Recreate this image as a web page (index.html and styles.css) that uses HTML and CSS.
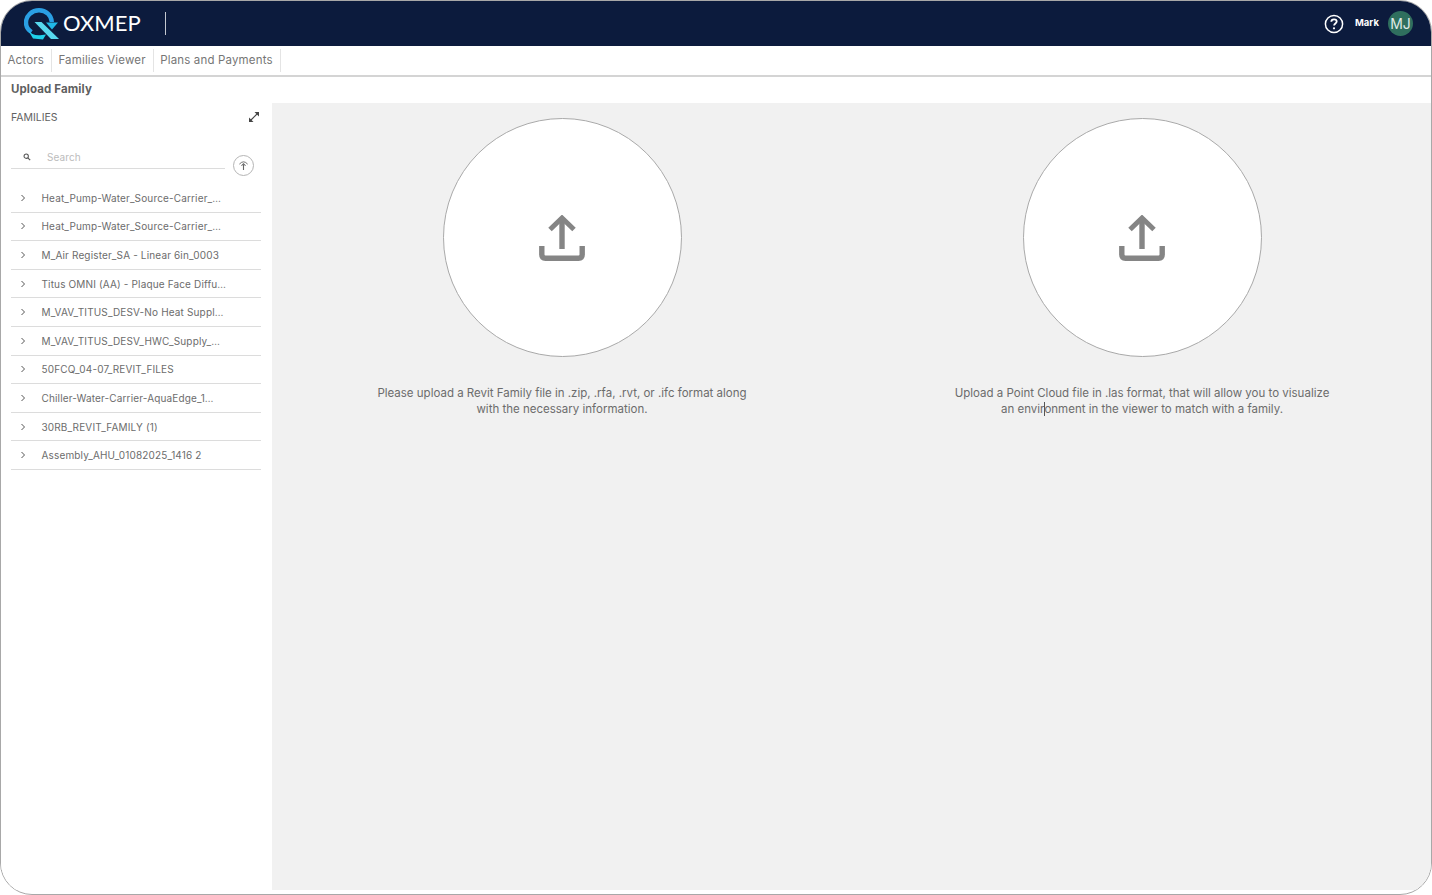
FILE: index.html
```html
<!DOCTYPE html>
<html lang="en">
<head>
<meta charset="utf-8">
<title>OXMEP - Upload Family</title>
<link rel="stylesheet" href="styles.css">
</head>
<body>
<div class="frame">
  <header class="topbar">
    <div class="brand">
      <svg class="logo-mark" viewBox="0 0 36 32" aria-hidden="true">
        <path d="M7.500 24 C3.500 21.500 2 18 2 14.500 C2 7.500 8 2.300 15 2.300 C22 2.300 27.500 7.500 27.800 14" fill="none" stroke="#2a9fe4" stroke-width="4.400"/>
        <path d="M22 14.500 L34 14.500 L28 21.500 Z" fill="#20b8e6"/>
        <path d="M4 22 C7 26.500 12 28 18 27 L22 26.500 L19 31.500 L9 30.500 Z" fill="#1fd0ea"/>
        <path d="M10.500 14 L17.500 14 L35 31 L27 31 Z" fill="#57d8ee"/>
      </svg>
      <span class="logo-text">OXMEP</span>
      <span class="brand-rule"></span>
    </div>
    <div class="user">
      <svg class="help" viewBox="0 0 20 20" aria-hidden="true">
        <circle cx="10" cy="10" r="8.600" fill="none" stroke="#fff" stroke-width="1.500"/>
        <path d="M7.300 7.800 C7.300 6.200 8.500 5.300 10 5.300 C11.600 5.300 12.700 6.300 12.700 7.600 C12.700 9.400 10.100 9.500 10.100 11.500" fill="none" stroke="#fff" stroke-width="1.800"/>
        <circle cx="10" cy="14.300" r="1.100" fill="#fff"/>
      </svg>
      <span class="user-name">Mark</span>
      <span class="avatar">MJ</span>
    </div>
  </header>

  <nav class="tabs">
    <a class="tab">Actors</a>
    <a class="tab">Families Viewer</a>
    <a class="tab">Plans and Payments</a>
  </nav>

  <div class="page-title">Upload Family</div>

  <div class="content">
    <aside class="sidebar">
      <div class="side-head">
        <span>FAMILIES</span>
        <svg class="expand" viewBox="0 0 12 12" aria-hidden="true">
          <path d="M1.500 10.500 L10.500 1.500" stroke="#444" stroke-width="1.100"/>
          <path d="M6.500 1 H11 V5.500 Z" fill="#444"/>
          <path d="M1 6.500 V11 H5.500 Z" fill="#444"/>
        </svg>
      </div>
      <div class="search-row">
        <div class="search">
          <svg class="search-icon" viewBox="0 0 10 10" aria-hidden="true">
            <circle cx="4" cy="4" r="2.700" fill="none" stroke="#555" stroke-width="1.300"/>
            <path d="M6 6 L9 9" stroke="#555" stroke-width="1.500"/>
          </svg>
          <span class="search-text">Search</span>
        </div>
        <span class="top-btn">
          <svg viewBox="0 0 12 12" aria-hidden="true">
            <path d="M1.500 4.500 Q6 -0.500 10.500 4.500" fill="none" stroke="#666" stroke-width="1"/>
            <path d="M6 11 V4.500" stroke="#666" stroke-width="1.200"/>
            <path d="M3.800 6.300 L6 4 L8.200 6.300" fill="none" stroke="#666" stroke-width="1.100"/>
          </svg>
        </span>
      </div>
      <ul class="family-list">
        <li class="family"><svg class="chev" viewBox="0 0 6 8"><path d="M1.500 1 L4.500 4 L1.500 7" fill="none" stroke="#555" stroke-width="1"/></svg><span class="family-name">Heat_Pump-Water_Source-Carrier_…</span></li>
        <li class="family"><svg class="chev" viewBox="0 0 6 8"><path d="M1.500 1 L4.500 4 L1.500 7" fill="none" stroke="#555" stroke-width="1"/></svg><span class="family-name">Heat_Pump-Water_Source-Carrier_…</span></li>
        <li class="family"><svg class="chev" viewBox="0 0 6 8"><path d="M1.500 1 L4.500 4 L1.500 7" fill="none" stroke="#555" stroke-width="1"/></svg><span class="family-name">M_Air Register_SA - Linear 6in_0003</span></li>
        <li class="family"><svg class="chev" viewBox="0 0 6 8"><path d="M1.500 1 L4.500 4 L1.500 7" fill="none" stroke="#555" stroke-width="1"/></svg><span class="family-name">Titus OMNI (AA) - Plaque Face Diffu…</span></li>
        <li class="family"><svg class="chev" viewBox="0 0 6 8"><path d="M1.500 1 L4.500 4 L1.500 7" fill="none" stroke="#555" stroke-width="1"/></svg><span class="family-name">M_VAV_TITUS_DESV-No Heat Suppl…</span></li>
        <li class="family"><svg class="chev" viewBox="0 0 6 8"><path d="M1.500 1 L4.500 4 L1.500 7" fill="none" stroke="#555" stroke-width="1"/></svg><span class="family-name">M_VAV_TITUS_DESV_HWC_Supply_…</span></li>
        <li class="family"><svg class="chev" viewBox="0 0 6 8"><path d="M1.500 1 L4.500 4 L1.500 7" fill="none" stroke="#555" stroke-width="1"/></svg><span class="family-name">50FCQ_04-07_REVIT_FILES</span></li>
        <li class="family"><svg class="chev" viewBox="0 0 6 8"><path d="M1.500 1 L4.500 4 L1.500 7" fill="none" stroke="#555" stroke-width="1"/></svg><span class="family-name">Chiller-Water-Carrier-AquaEdge_1…</span></li>
        <li class="family"><svg class="chev" viewBox="0 0 6 8"><path d="M1.500 1 L4.500 4 L1.500 7" fill="none" stroke="#555" stroke-width="1"/></svg><span class="family-name">30RB_REVIT_FAMILY (1)</span></li>
        <li class="family"><svg class="chev" viewBox="0 0 6 8"><path d="M1.500 1 L4.500 4 L1.500 7" fill="none" stroke="#555" stroke-width="1"/></svg><span class="family-name">Assembly_AHU_01082025_1416 2</span></li>
      </ul>
    </aside>

    <main class="main">
      <section class="upload">
        <div class="drop">
          <svg class="up-icon" viewBox="0 0 46 46" aria-hidden="true">
            <path d="M23 34 V3" stroke="#858585" stroke-width="5.400" fill="none"/>
            <path d="M11 14.500 L23 3 L35 14.500" stroke="#858585" stroke-width="5" fill="none"/>
            <path d="M2.800 31 V39.500 Q2.800 43.200 6.500 43.200 H39.500 Q43.200 43.200 43.200 39.500 V31" stroke="#858585" stroke-width="5.400" fill="none"/>
          </svg>
        </div>
        <p class="upload-text">Please upload a Revit Family file in .zip, .rfa, .rvt, or .ifc format along<br>with the necessary information.</p>
      </section>
      <section class="upload">
        <div class="drop">
          <svg class="up-icon" viewBox="0 0 46 46" aria-hidden="true">
            <path d="M23 34 V3" stroke="#858585" stroke-width="5.400" fill="none"/>
            <path d="M11 14.500 L23 3 L35 14.500" stroke="#858585" stroke-width="5" fill="none"/>
            <path d="M2.800 31 V39.500 Q2.800 43.200 6.500 43.200 H39.500 Q43.200 43.200 43.200 39.500 V31" stroke="#858585" stroke-width="5.400" fill="none"/>
          </svg>
        </div>
        <p class="upload-text">Upload a Point Cloud file in .las format, that will allow you to visualize<br>an envir<span class="caret"></span>onment in the viewer to match with a family.</p>
      </section>
    </main>
  </div>
</div>
</body>
</html>
```
FILE: styles.css
```css
* { box-sizing: border-box; }
html, body { margin: 0; height: 100%; background: #fff; }
body { font-family: "Inter", "Open Sans", sans-serif; color: #666; overflow: hidden; }

.frame {
  width: 1432px;
  height: 895px;
  border: 1px solid #a8a8a8;
  border-radius: 32px;
  overflow: hidden;
  display: flex;
  flex-direction: column;
  background: #fff;
}

.topbar {
  flex: 0 0 45px;
  background: #0c1b3d;
  display: flex;
  align-items: center;
  justify-content: space-between;
  padding: 0 18px 0 23px;
}
.brand { display: flex; align-items: center; }
.logo-mark { width: 36px; height: 32px; }
.logo-text {
  font-family: "Lato", sans-serif;
  font-weight: 400;
  font-size: 22px;
  line-height: 26px;
  margin-top: -1px;
  color: #fff;
  letter-spacing: 0;
  margin-left: 3px;
  width: 80px;
}
.brand-rule { width: 1px; height: 23px; background: #c4c8d0; margin-left: 22px; }

.user { display: flex; align-items: center; }
.help { width: 20px; height: 20px; margin-right: 11px; }
.user-name { font-size: 9.500px; font-weight: 700; color: #fff; width: 33px; margin-top: -2px; }
.avatar {
  width: 25px;
  height: 25px;
  border-radius: 50%;
  background: #2f6f5e;
  color: #dfe9e6;
  font-size: 14px;
  display: flex;
  align-items: center;
  justify-content: center;
}

.tabs {
  flex: 0 0 29px;
  display: flex;
  padding-top: 3px;
  padding-bottom: 3px;
  background: #fff;
}
.tab {
  font-size: 11.500px;
  letter-spacing: 0.16px;
  line-height: 23px;
  color: #767676;
  padding: 0 7px 0 6.500px;
  border-right: 1px solid #e4e4e4;
}

.page-title {
  flex: 0 0 28px;
  border-top: 2px solid #d4d4d4;
  font-size: 11.500px;
  font-weight: 700;
  letter-spacing: 0.1px;
  color: #5f5f5f;
  line-height: 25px;
  padding-left: 10px;
}

.content { flex: 1; display: flex; min-height: 0; padding-bottom: 4px; }

.sidebar { flex: 0 0 271px; padding: 0 10px; background: #fff; }
.side-head {
  height: 28px;
  display: flex;
  align-items: center;
  justify-content: space-between;
  font-size: 10.500px;
  color: #626262;
}
.expand { width: 12px; height: 12px; margin-right: 2px; margin-top: -1px; }

.search-row { display: flex; align-items: flex-start; justify-content: space-between; padding-right: 8px; margin-top: 14px; }
.search {
  width: 214px;
  height: 24px;
  border-bottom: 1px solid #dcdcdc;
  display: flex;
  align-items: center;
  padding-left: 12px;
}
.search-icon { width: 8px; height: 8px; }
.search-text { font-size: 10px; letter-spacing: 0.1px; color: #bcbcbc; margin-left: 16px; }
.top-btn {
  width: 21px;
  height: 21px;
  border: 1px solid #b5b5b5;
  border-radius: 50%;
  display: flex;
  align-items: center;
  justify-content: center;
  margin-top: 10px;
}
.top-btn svg { width: 11px; height: 11px; }

.family-list { list-style: none; margin: 8px 0 0; padding: 0; width: 250px; }
.family {
  height: 28.600px;
  border-bottom: 1px solid #dcdcdc;
  display: flex;
  align-items: center;
  padding-left: 9px;
}
.chev { width: 6px; height: 8px; flex: none; }
.family-name {
  font-size: 10px;
  letter-spacing: 0.15px;
  color: #6c6c6c;
  margin-left: 15.500px;
  white-space: nowrap;
}

.main { flex: 1; background: #f1f1f1; display: flex; }
.upload { flex: 0 0 580px; display: flex; flex-direction: column; align-items: center; padding-top: 15px; }
.drop {
  width: 239px;
  height: 239px;
  border: 1px solid #a9a9a9;
  border-radius: 50%;
  background: #fff;
  display: flex;
  align-items: center;
  justify-content: center;
}
.up-icon { width: 46px; height: 46px; }
.upload-text {
  margin: 28px 0 0;
  font-size: 11.500px;
  line-height: 16px;
  color: #6c6c6c;
  text-align: center;
  white-space: nowrap;
}
.caret { display: inline-block; width: 1px; height: 14px; background: #555; vertical-align: -3px; margin: 0 -0.500px; }
```
